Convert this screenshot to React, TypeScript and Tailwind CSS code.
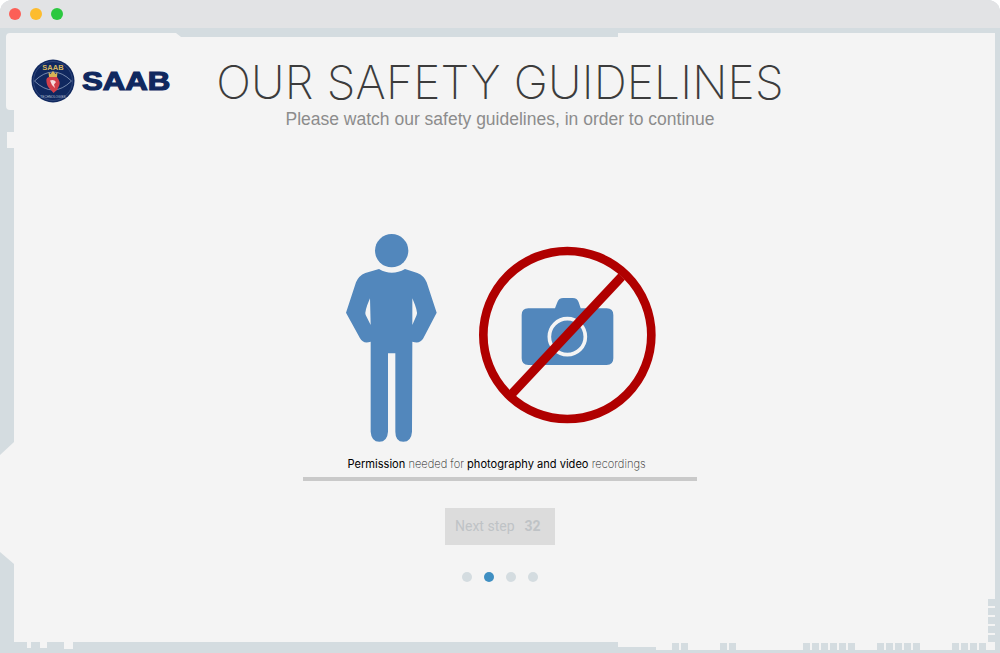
const dots = [false, true, false, false];

const bottomBlocks = [672, 681, 720, 729, 803, 812, 821, 830, 839, 848, 877, 886, 895, 904, 913, 952, 961, 970, 979];
const sideBlocks = [599, 608, 617, 626, 635];

const Logo = () => (
  <div className="flex items-center gap-[7px]">
    <svg width="44" height="44" viewBox="0 0 44 44">
      <circle cx="22" cy="22" r="21.5" fill="#10285f" />
      <path d="M3.5 22 Q22 4 40.500 22 Q22 40 3.500 22 Z" fill="none" stroke="#9fb0cc" strokeWidth="0.7" />
      <circle cx="22" cy="22" r="19.5" fill="none" stroke="#4c6292" strokeWidth="0.5" />
      <text x="22" y="11" textAnchor="middle" className="font-['Liberation_Sans',sans-serif] font-bold text-[7.500px]" fill="#d6b75e">
        SAAB
      </text>
      <path d="M17.500 13 L19.500 15 L22 12 L24.500 15 L26.500 13 L26 18 L18 18 Z" fill="#d8b455" />
      <path d="M15.500 23 Q14.500 18 19 18 L26 18 Q30 23 28 27 L26 31 L22.500 34 L19.500 30.500 Q16 28 15.500 23 Z" fill="#d23f4a" />
      <path d="M19 21.500 Q23 20 25 23 L23 25.500 L24 29 L21 26 Z" fill="#f6dcdc" />
      <text x="22" y="38.500" textAnchor="middle" className="font-['Liberation_Sans',sans-serif] text-[3.200px]" fill="#b8c2d6">
        TECHNOLOGIES
      </text>
    </svg>
    <span className="origin-left scale-x-[1.2] font-['Liberation_Sans',sans-serif] text-[26px] leading-none font-bold text-[#10285f] [-webkit-text-stroke:1.2px_#10285f]">
      SAAB
    </span>
  </div>
);

const SafetyIllustration = () => (
  <svg className="block" width="340" height="225" viewBox="0 0 1020 675">
    <circle cx="185" cy="77" r="50" fill="#5287bc" />
    <path
      d="M147 132 Q185 155 225 132 L262 144 Q282 152 290 172 L320 263 L280 340 Q270 358 247 350 L246 620 Q244 650 220 650 Q196 650 196 620 L196 385 L174 385 L174 620 Q172 650 148 650 Q124 650 122 620 L122 350 Q100 358 90 340 L48 263 L78 172 Q86 152 106 144 Z"
      fill="#5287bc"
    />
    <path d="M120 220 Q102 262 107 270 L122 300 Z" fill="#f4f4f4" />
    <path d="M247 220 Q265 262 260 270 L247 300 Z" fill="#f4f4f4" />
    <path
      d="M575 270 Q575 250 595 250 L675 250 L682 232 Q686 219 700 219 L728 219 Q742 219 746 232 L752 250 L830 250 Q850 250 850 270 L850 400 Q850 420 830 420 L595 420 Q575 420 575 400 Z"
      fill="#5287bc"
    />
    <circle cx="712" cy="335" r="54" fill="none" stroke="#f4f4f4" strokeWidth="11" />
    <circle cx="712" cy="330" r="252" fill="none" stroke="#b00000" strokeWidth="26" />
    <path d="M875 155 L547 505" stroke="#b00000" strokeWidth="27" />
  </svg>
);

// ragged edges of the backdrop, drawn over the panel
const FrameEdges = () => (
  <svg className="absolute inset-0 pointer-events-none" width="1000" height="653" viewBox="0 0 1000 653">
    <path d="M14 442 L0 455 L0 552 L14 564 Z" fill="#f4f4f4" />
    <path d="M10 33 L176 33 L181 37 L14 37 L14 110 L10 110 Q6 110 6 106 L6 37 Q6 33 10 33 Z" fill="#f4f4f4" />
    <path d="M618 33 L995 33 L995 37 L618 37 Z" fill="#f4f4f4" />
    <path d="M7 132 L14 132 L14 148 L7 148 Z" fill="#f4f4f4" />
    <path d="M27 642 L31 642 L31 648 L27 648 Z M40 642 L47 642 L47 648 L40 648 Z M64 642 L73 642 L73 649 L64 649 Z" fill="#f4f4f4" />
    <path d="M618 642 L995 642 L995 650 L656 650 L656 647 L618 647 Z" fill="#f4f4f4" />
    {bottomBlocks.map((x) => (
      <rect key={x} x={x} y={643} width={7} height={8} fill="#d4dce0" />
    ))}
    {sideBlocks.map((y) => (
      <rect key={y} x={988} y={y} width={8} height={7} fill="#d4dce0" />
    ))}
  </svg>
);

export default function App() {
  return (
    <div className="relative w-[1000px] h-[653px] bg-[#d4dce0] rounded-t-[12px] overflow-hidden flex flex-col">
      <div className="h-[28px] shrink-0 bg-[#e2e3e5] flex items-center gap-[9px] pl-[9px]">
        <span className="w-[12px] h-[12px] rounded-full bg-[#fc5f57]" />
        <span className="w-[12px] h-[12px] rounded-full bg-[#fdbc2e]" />
        <span className="w-[12px] h-[12px] rounded-full bg-[#2cc840]" />
      </div>

      <main className="relative flex-1 ml-[14px] mr-[5px] mt-[9px] mb-[11px] bg-[#f4f4f4] flex flex-col items-center">
        <div className="absolute left-[17px] top-[22px] z-10">
          <Logo />
        </div>
        <h1 className="mt-[21px] -ml-[9px] font-['Inter',sans-serif] font-extralight text-[46px] leading-[48px] tracking-[0.2px] text-[#3c3c3c] whitespace-nowrap">
          OUR SAFETY GUIDELINES
        </h1>
        <p className="-ml-[9px] font-['Liberation_Sans',sans-serif] text-[17.5px] leading-[26px] text-[#8c8c8c] whitespace-nowrap">
          Please watch our safety guidelines, in order to continue
        </p>

        <div className="mt-[93px] -ml-[9px]">
          <SafetyIllustration />
        </div>

        <p className="mt-[2px] -ml-[16px] font-['Inter',sans-serif] font-extralight text-[11.1px] leading-[24px] text-[#222222] whitespace-nowrap">
          <span className="font-normal text-black">Permission</span> needed for{' '}
          <span className="font-normal text-black">photography and video</span> recordings
        </p>
        <div className="w-[394px] h-[4px] -ml-[9px] mt-[1px] bg-[#c9c9c9]" />

        <button className="mt-[27px] -ml-[9px] w-[110px] h-[37px] pl-[10px] bg-[#dcdcdc] flex items-center gap-[10px] font-['Roboto',sans-serif] text-[14px] text-[#bfc3c6]">
          <span>Next step</span>
          <span className="font-bold">32</span>
        </button>

        <div className="mt-[27px] -ml-[9px] flex gap-[12px]">
          {dots.map((active, i) => (
            <span
              key={i}
              className={`w-[10px] h-[10px] rounded-full ${active ? 'bg-[#3f8fc2]' : 'bg-[#d4dce0]'}`}
            />
          ))}
        </div>
      </main>

      <FrameEdges />
    </div>
  );
}
